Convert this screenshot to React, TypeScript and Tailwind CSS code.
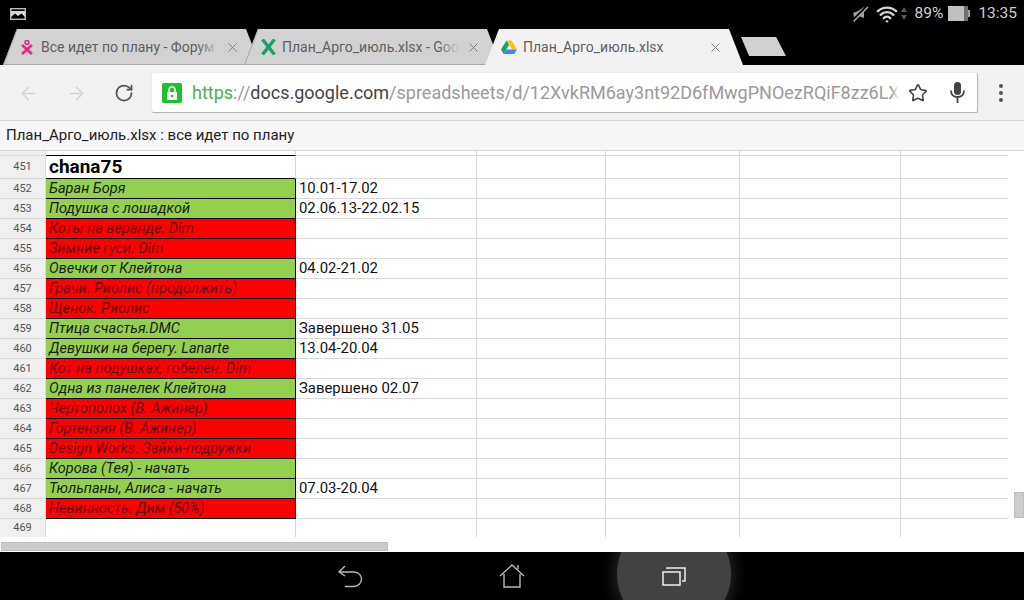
import React from 'react';
import { ArrowLeft, ArrowRight, RotateCw, Star, X, Wifi } from 'lucide-react';

const font = { fontFamily: '"Roboto", "Noto Sans", sans-serif' };

const rows: { n: number; name: string; green: boolean; date?: string }[] = [
  { n: 452, name: 'Баран Боря', green: true, date: '10.01-17.02' },
  { n: 453, name: 'Подушка с лошадкой', green: true, date: '02.06.13-22.02.15' },
  { n: 454, name: 'Коты на веранде. Dim', green: false },
  { n: 455, name: 'Зимние гуси. Dim', green: false },
  { n: 456, name: 'Овечки от Клейтона', green: true, date: '04.02-21.02' },
  { n: 457, name: 'Грачи. Риолис (продолжить)', green: false },
  { n: 458, name: 'Щенок. Риолис', green: false },
  { n: 459, name: 'Птица счастья.DMC', green: true, date: 'Завершено 31.05' },
  { n: 460, name: 'Девушки на берегу. Lanarte', green: true, date: '13.04-20.04' },
  { n: 461, name: 'Кот на подушках, гобелен. Dim', green: false },
  { n: 462, name: 'Одна из панелек Клейтона', green: true, date: 'Завершено 02.07' },
  { n: 463, name: 'Чертополох (В. Ажинер)', green: false },
  { n: 464, name: 'Гортензия (В. Ажинер)', green: false },
  { n: 465, name: 'Design Works. Зайки-подружки', green: false },
  { n: 466, name: 'Корова (Тея) - начать', green: true },
  { n: 467, name: 'Тюльпаны, Алиса - начать', green: true, date: '07.03-20.04' },
  { n: 468, name: 'Невинность. Дим (50%)', green: false },
];

const EmptyCols = () => (
  <>
    <div className="w-[129px] border-r border-b border-[#d9d9d9]" />
    <div className="w-[134px] border-r border-b border-[#d9d9d9]" />
    <div className="w-[161px] border-r border-b border-[#d9d9d9]" />
    <div className="w-[107px] border-b border-[#d9d9d9]" />
  </>
);

const Tab = ({ title, icon, active, width, fade }: { title: string; icon: React.ReactNode; active?: boolean; width: number; fade?: boolean }) => (
  <div className="relative h-[36px] shrink-0 -mr-[16px]" style={{ width, zIndex: active ? 2 : 1 }}>
    <svg className="absolute inset-0" width={width} height={36}>
      <path d={`M0 36 L14 0 H${width - 14} L${width} 36 Z`} fill={active ? '#f2f2f2' : '#d2d2d2'} />
      {!active && <path d={`M0.5 36 L14 0.5 M0 35.5 H${width}`} fill="none" stroke="#a8a8a8" strokeWidth="1" />}
    </svg>
    <div className="relative flex h-full items-center pl-[16px] pr-[20px]">
      <div className="flex w-[16px] shrink-0 justify-center">{icon}</div>
      <div className="relative ml-[6px] flex-1 overflow-hidden whitespace-nowrap text-[14px] text-[#5f5f5f]">
        {title}
        {fade && <div className="absolute right-0 top-0 h-full w-[22px] bg-gradient-to-r from-transparent to-[#d2d2d2]" />}
      </div>
      <X size={15} strokeWidth={1.4} className="ml-[6px] shrink-0 text-[#777]" />
    </div>
  </div>
);

export default function App() {
  return (
    <div className="relative flex h-[600px] w-[1024px] flex-col overflow-hidden bg-white" style={font}>
      {/* status bar */}
      <div className="flex h-[29px] items-center bg-black pb-[2px] pl-[10px] pr-[7px] text-[#d0d0d0]">
        <svg width="16" height="12" viewBox="0 0 16 12">
          <rect x="0.7" y="0.7" width="14.6" height="10.6" fill="none" stroke="#bdbdbd" strokeWidth="1.4" />
          <path d="M1 9 L1 3 H15 V9 L11.5 5.5 L8 8 L5 5.5 Z" fill="#d8d8d8" />
        </svg>
        <div className="ml-auto flex items-center">
          <svg width="17" height="17" viewBox="0 0 17 17">
            <path d="M1 8 L5 6.5 L12 2 L12 13 L6 11 L3 15 Z" fill="#a0a0a0" />
            <path d="M0.5 16 L15.5 1" stroke="#000" strokeWidth="3" />
            <path d="M1.5 16.5 L16 2" stroke="#a8a8a8" strokeWidth="1.5" />
          </svg>
          <Wifi size={22} strokeWidth={2.6} className="ml-[7px] text-[#d8d8d8]" />
          <svg width="6" height="14" viewBox="0 0 6 14" className="ml-[3px]">
            <path d="M3 0 L6 5 H0 Z M0 8 H6 L3 13 Z" fill="#5a5a5a" />
          </svg>
          <span className="ml-[8px] text-[15.5px]">89%</span>
          <svg width="22" height="15" viewBox="0 0 22 15" className="ml-[5px]">
            <rect x="0" y="0" width="16" height="15" fill="#c0c0c0" />
            <rect x="16" y="0" width="4" height="15" fill="#707070" />
            <rect x="20" y="4" width="2" height="7" fill="#a0a0a0" />
          </svg>
          <span className="ml-[8px] text-[15.5px]">13:35</span>
        </div>
      </div>

      {/* tabs */}
      <div className="flex h-[36px] items-end bg-black pl-[3px]">
        <Tab
          width={257}
          title="Все идет по плану - Форум s"
          fade
          icon={
            <svg width="12" height="15" viewBox="0 0 12 15">
              <circle cx="6" cy="2.4" r="1.9" fill="none" stroke="#e6267f" strokeWidth="1.6" />
              <path d="M1 5 L11 14 M11 5 L1 14" stroke="#e6267f" strokeWidth="2.6" />
            </svg>
          }
        />
        <Tab
          width={257}
          title="План_Арго_июль.xlsx - Google"
          fade
          icon={
            <svg width="15" height="16" viewBox="0 0 15 16">
              <path d="M1.5 0.5 L13.5 15.5 M13.5 0.5 L1.5 15.5" stroke="#1d9f66" strokeWidth="3.4" />
            </svg>
          }
        />
        <Tab
          width={258}
          active
          title="План_Арго_июль.xlsx"
          icon={
            <svg width="16" height="15" viewBox="0 0 16 15">
              <path d="M5.5 0.5 H10.5 L16 9.5 H11 Z" fill="#f5c518" />
              <path d="M5.5 0.5 L8 5 L2.7 14 L0 9.5 Z" fill="#1ea362" />
              <path d="M5.3 9.5 H16 L13.3 14 H2.7 Z" fill="#4285f4" />
            </svg>
          }
        />
        <div className="mb-[9px] ml-[14px] h-[19px] w-[45px] bg-[#d0d0d0] [clip-path:polygon(0_0,78%_0,100%_100%,18%_100%)]" />
      </div>

      {/* toolbar */}
      <div className="flex h-[56px] items-center border-b border-[#d4d4d4] bg-[#f2f2f2] pt-[1px]">
        <ArrowLeft size={21} strokeWidth={1.7} className="ml-[18px] text-[#d4d4d4]" />
        <ArrowRight size={21} strokeWidth={1.7} className="ml-[27px] text-[#d4d4d4]" />
        <RotateCw size={20} strokeWidth={2.1} className="ml-[27px] text-[#555]" />
        <div className="ml-[18px] flex h-[40px] w-[826px] items-center overflow-hidden rounded-[2px] border-b border-r border-[#b9b9b9] bg-white shadow-[0_0_1px_#bbb]">
          <div className="ml-[10px] flex h-[20px] w-[20px] shrink-0 items-center justify-center rounded-[2px] bg-[#1fc02f]">
            <svg width="12" height="14" viewBox="0 0 12 14">
              <path d="M3 6.5 V4 C3 2 4.4 1 6 1 C7.6 1 9 2 9 4 V6.5" fill="none" stroke="#fff" strokeWidth="1.6" />
              <rect x="1" y="6" width="10" height="8" fill="#fff" />
              <circle cx="6" cy="10" r="1.3" fill="#1fc02f" />
            </svg>
          </div>
          <div className="relative ml-[10px] w-[707px] overflow-hidden whitespace-nowrap text-[18px] text-[#9a9a9a]">
            <span className="text-[#4fae54]">https</span>://<span className="text-[#444]">docs.google.com</span>/spreadsheets/d/12XvkRM6ay3nt92D6fMwgPNOezRQiF8zz6LXt
            <div className="absolute right-0 top-0 h-full w-[8px] bg-gradient-to-r from-transparent to-white" />
          </div>
          <Star size={20} strokeWidth={1.9} className="ml-[9px] shrink-0 text-[#444]" />
          <svg width="15" height="21" viewBox="0 0 15 21" className="ml-[22px] shrink-0">
            <rect x="4" y="0" width="7" height="13" rx="3.5" fill="#444" />
            <path d="M1 8.5 C1 12.5 3.6 15 7.5 15 C11.4 15 14 12.5 14 8.5 M7.5 15 V21" fill="none" stroke="#444" strokeWidth="1.8" />
          </svg>
        </div>
        <div className="ml-[21px] flex flex-col gap-[3px]">
          <div className="h-[4px] w-[4px] rounded-full bg-[#555]" />
          <div className="h-[4px] w-[4px] rounded-full bg-[#555]" />
          <div className="h-[4px] w-[4px] rounded-full bg-[#555]" />
        </div>
      </div>

      {/* doc title */}
      <div className="flex h-[30px] items-center border-b border-[#d4d4d4] bg-[#f7f7f7] pl-[6px] text-[15px] text-[#222]">
        План_Арго_июль.xlsx : все идет по плану
      </div>

      {/* sheet */}
      <div className="relative flex-1 bg-white text-[14.9px] text-[#111]">
        <div className="flex h-[5px] pr-[16px]">
          <div className="w-[46px] border-r border-b border-[#d9d9d9] bg-[#f0f0f0]" />
          <div className="w-[250px] border-r border-b border-r-[#d9d9d9] border-b-black" />
          <div className="w-[181px] border-r border-b border-[#d9d9d9]" />
          <EmptyCols />
        </div>
        <div className="flex h-[23px] pr-[16px]">
          <div className="flex w-[46px] items-center justify-center border-r border-b border-[#d9d9d9] bg-[#f0f0f0] pt-[1px] text-[11px] text-[#555]">451</div>
          <div className="flex w-[250px] items-center border-r border-b border-r-[#d9d9d9] border-b-black pl-[3px] text-[19px] font-bold text-black">chana75</div>
          <div className="w-[181px] border-r border-b border-[#d9d9d9]" />
          <EmptyCols />
        </div>
        {rows.map((r) => (
          <div key={r.n} className="flex h-[20px] pr-[16px]">
            <div className="flex w-[46px] items-center justify-center border-r border-b border-[#d9d9d9] bg-[#f0f0f0] pt-[1px] text-[11px] text-[#555]">{r.n}</div>
            <div className={`flex w-[250px] items-center overflow-hidden whitespace-nowrap border-r border-b border-black pl-[3px] text-[14.5px] italic ${r.green ? 'bg-[#92d050] text-[#1a1a1a]' : 'bg-[#ff0000] text-[#5c0808]'}`}>
              {r.name}
            </div>
            <div className="flex w-[181px] items-center border-r border-b border-[#d9d9d9] pl-[3px]">{r.date}</div>
            <EmptyCols />
          </div>
        ))}
        <div className="flex h-[18px] pr-[16px]">
          <div className="flex w-[46px] items-center justify-center border-r border-[#d9d9d9] bg-[#f0f0f0] pt-[1px] text-[11px] text-[#555]">469</div>
          <div className="w-[250px] border-r border-[#d9d9d9]" />
          <div className="w-[181px] border-r border-[#d9d9d9]" />
          <div className="w-[129px] border-r border-[#d9d9d9]" />
          <div className="w-[134px] border-r border-[#d9d9d9]" />
          <div className="w-[161px] border-r border-[#d9d9d9]" />
          <div className="w-[107px]" />
        </div>
        {/* scrollbars */}
        <div className="absolute right-0 top-[341px] h-[26px] w-[10px] border border-[#bdbdbd] bg-[#cccccc]" />
        <div className="absolute left-[1px] top-[391px] h-[9px] w-[387px] border border-[#bdbdbd] bg-[#cccccc]" />
      </div>

      {/* nav bar */}
      <div className="relative flex h-[48px] items-center overflow-hidden bg-black">
        <div className="absolute left-[617px] top-[-35px] h-[114px] w-[114px] rounded-full bg-[#424242] shadow-[0_0_14px_4px_#222]" />
        <svg width="27" height="25" viewBox="0 0 27 25" className="relative ml-[337px]" fill="none" stroke="#b8b8b8" strokeWidth="1.4">
          <path d="M8 2 L2 8 L8 12" />
          <path d="M2 8 H17 C22 8 24.5 12 24.5 15 C24.5 19 21 22.5 17 22.5 H8" />
        </svg>
        <svg width="26" height="26" viewBox="0 0 26 26" className="relative ml-[135px]" fill="none" stroke="#b8b8b8" strokeWidth="1.4">
          <path d="M1 13 L13 2 L25 13 M19 6 V2 M5 11 V24 H21 V11" />
        </svg>
        <svg width="26" height="22" viewBox="0 0 26 22" className="relative ml-[136px]" fill="none" stroke="#f0f0f0" strokeWidth="1.5">
          <rect x="2" y="7" width="17" height="13" />
          <path d="M6 4 V3 H24 V16 H21" />
        </svg>
      </div>
    </div>
  );
}
